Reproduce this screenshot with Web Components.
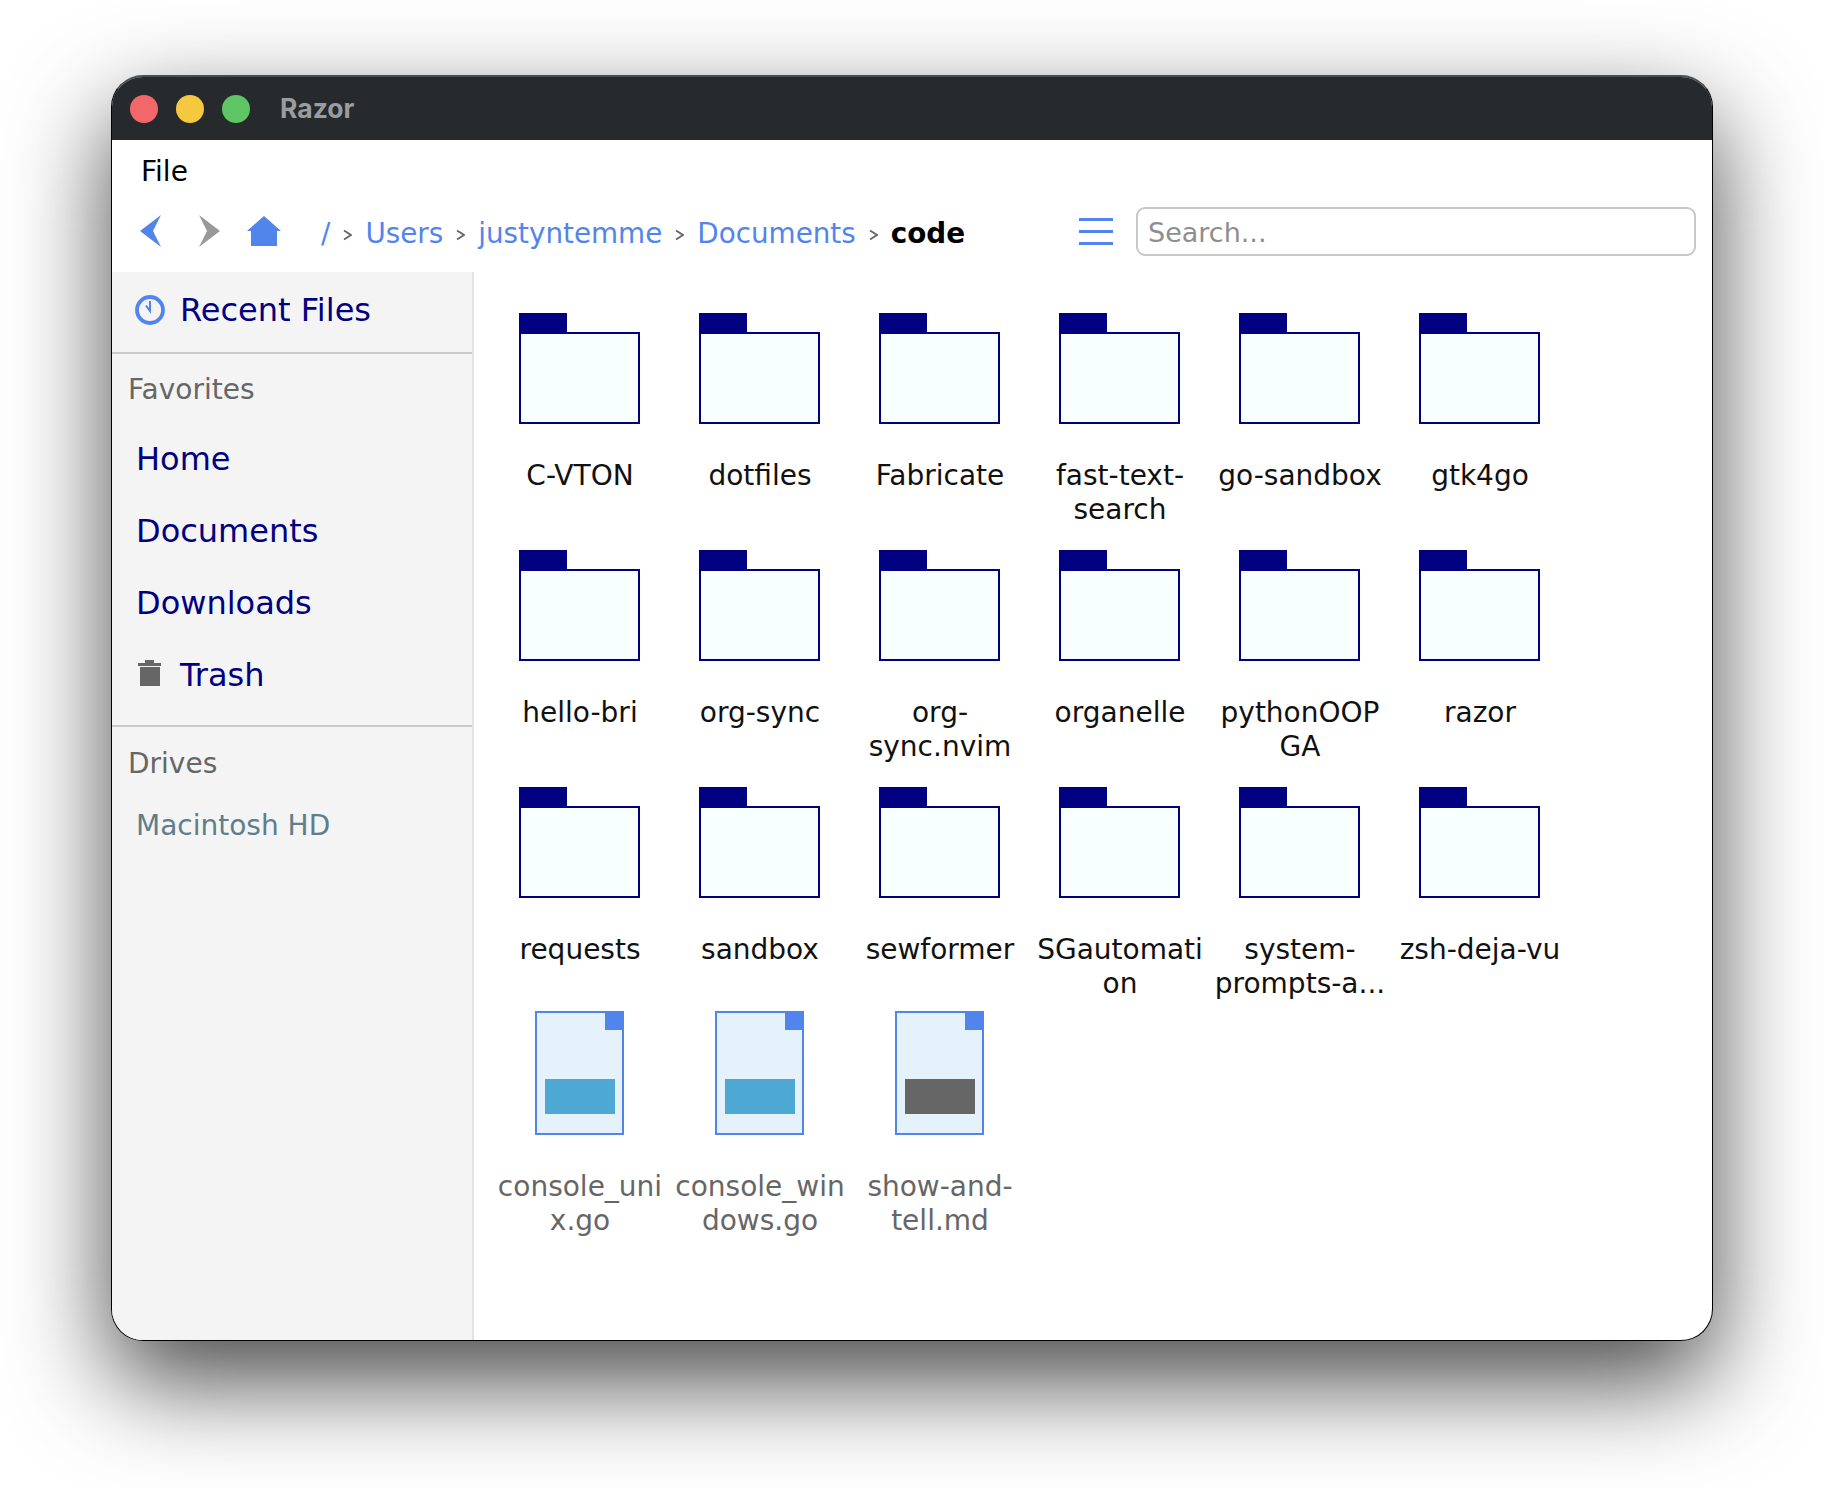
<!DOCTYPE html>
<html>
<head>
<meta charset="utf-8">
<title>Razor</title>
<style>
  html, body { margin: 0; background: #fff; }
  body { padding: 75px 111px 147px; font-family: "DejaVu Sans", sans-serif; }
</style>
</head>
<body>
<razor-window>
  <title-bar slot="title">Razor</title-bar>
  <menu-bar slot="menu">File</menu-bar>
  <tool-bar slot="tools">
    <path-crumb href>/</path-crumb>
    <path-crumb href sep>Users</path-crumb>
    <path-crumb href sep>justyntemme</path-crumb>
    <path-crumb href sep>Documents</path-crumb>
    <path-crumb sep>code</path-crumb>
  </tool-bar>
  <side-bar slot="side">
    <side-section>
      <side-item kind="recent">Recent Files</side-item>
    </side-section>
    <side-section title="Favorites" gap>
      <side-item>Home</side-item>
      <side-item>Documents</side-item>
      <side-item>Downloads</side-item>
      <side-item kind="trash">Trash</side-item>
    </side-section>
    <side-section title="Drives" last>
      <side-item kind="drive">Macintosh HD</side-item>
    </side-section>
  </side-bar>
  <file-grid slot="main">
    <file-tile>C-VTON</file-tile>
    <file-tile>dotfiles</file-tile>
    <file-tile>Fabricate</file-tile>
    <file-tile>fast-text-search</file-tile>
    <file-tile>go-sandbox</file-tile>
    <file-tile>gtk4go</file-tile>
    <file-tile>hello-bri</file-tile>
    <file-tile>org-sync</file-tile>
    <file-tile>org-sync.nvim</file-tile>
    <file-tile>organelle</file-tile>
    <file-tile>pythonOOPGA</file-tile>
    <file-tile>razor</file-tile>
    <file-tile>requests</file-tile>
    <file-tile>sandbox</file-tile>
    <file-tile>sewformer</file-tile>
    <file-tile>SGautomation</file-tile>
    <file-tile>system-prompts-a...</file-tile>
    <file-tile>zsh-deja-vu</file-tile>
    <file-tile doc="#4da9d4">console_unix.go</file-tile>
    <file-tile doc="#4da9d4">console_windows.go</file-tile>
    <file-tile doc="#666666">show-and-tell.md</file-tile>
  </file-grid>
</razor-window>

<script>
const define = (name, css, html) => {
  customElements.define(name, class extends HTMLElement {
    constructor() {
      super();
      this.attachShadow({ mode: "open" });
      this.shadowRoot.innerHTML = `<style>${css}</style>${typeof html === "function" ? html(this) : html}`;
    }
  });
};

const BLUE = "#5285ec";

define("razor-window", `
  :host {
    display: flex;
    flex-direction: column;
    height: 1266px;
    box-sizing: border-box;
    border: 1px solid #000;
    border-top: 2px solid #4a4d50;
    border-radius: 32px;
    overflow: hidden;
    background: #fff;
    box-shadow: 0 40px 100px rgba(0, 0, 0, .72);
  }
  .body { flex: 1; display: flex; min-height: 0; }
`, `
  <slot name="title"></slot>
  <slot name="menu"></slot>
  <slot name="tools"></slot>
  <div class="body"><slot name="side"></slot><slot name="main"></slot></div>
`);

define("title-bar", `
  :host {
    display: flex;
    align-items: center;
    height: 63px;
    flex: none;
    background: #262a2d;
    padding-left: 18px;
    gap: 18px;
  }
  i { width: 28px; height: 28px; border-radius: 50%; display: block; }
  span {
    margin: 0 0 2px 12px;
    font: 700 26.5px Inter, sans-serif;
    color: #9a9da0;
  }
`, `
  <i style="background:#f2686a"></i>
  <i style="background:#f5c83f"></i>
  <i style="background:#5fc463"></i>
  <span><slot></slot></span>
`);

define("menu-bar", `
  :host {
    display: block;
    flex: none;
    height: 53px;
    padding: 13px 0 0 29px;
    box-sizing: border-box;
    font-size: 28px;
    line-height: 38px;
    color: #000;
  }
`, `<slot></slot>`);

define("tool-bar", `
  :host {
    display: flex;
    align-items: center;
    flex: none;
    height: 79px;
    padding: 0 16px 3px 28px;
    box-sizing: border-box;
  }
  svg { display: block; flex: none; }
  .back { margin-right: 36px; }
  .fwd { margin-right: 27px; }
  nav { display: flex; align-items: center; margin: 5px 0 0 40px; flex: 1; }
  .menu { margin-right: 23px; }
  input {
    width: 560px;
    height: 49px;
    margin-top: 1px;
    box-sizing: border-box;
    border: 2px solid #c8c8c8;
    border-radius: 9px;
    padding: 2px 10px 0;
    font: 27px "DejaVu Sans", sans-serif;
    outline: none;
    background: #fff;
  }
  input::placeholder { color: #8e8e8e; opacity: 1; }
`, `
  <svg class="back" width="22" height="32" viewBox="0 0 22 32"><path d="M0 16 21 0 13 16 21 32Z" fill="${BLUE}"/></svg>
  <svg class="fwd" width="22" height="32" viewBox="0 0 22 32"><path d="M22 16 1 0 9 16 1 32Z" fill="#999"/></svg>
  <svg width="34" height="31" viewBox="0 0 34 31"><path d="M17 0 34 15H30V30H4V15H0Z" fill="${BLUE}"/></svg>
  <nav><slot></slot></nav>
  <svg class="menu" width="34" height="27" viewBox="0 0 34 27"><path d="M0 0H34V3H0ZM0 12H34V15H0ZM0 24H34V27H0Z" fill="${BLUE}"/></svg>
  <input placeholder="Search...">
`);

define("path-crumb", `
  :host {
    display: inline-flex;
    align-items: center;
    font-size: 27.8px;
    line-height: 40px;
    color: #000;
    font-weight: 700;
    white-space: nowrap;
  }
  :host([href]) { color: #5285ec; font-weight: 400; }
  svg { margin: 2px 13px 0; display: block; }
`, el => `${el.hasAttribute("sep") ? `<svg width="9" height="12" viewBox="0 0 9 12"><path d="M1 1.5 8 6 1 10.5" fill="none" stroke="#666" stroke-width="1.8"/></svg>` : ""}<slot></slot>`);

define("side-bar", `
  :host {
    display: block;
    flex: none;
    width: 360px;
    background: #f4f4f4;
    border-right: 2px solid #e2e2e2;
  }
`, `<slot></slot>`);

define("side-section", `
  :host {
    display: block;
    border-bottom: 2px solid #cacaca;
  }
  :host([gap]) { padding-bottom: 14px; }
  :host([last]) { border-bottom: 0; }
  h2 {
    margin: 0;
    padding: 17px 0 15px 16px;
    font-size: 28px;
    line-height: 40px;
    font-weight: 400;
    color: #666;
  }
  :host([gap]) h2 { padding: 16px 0 13px 16px; }
`, el => `${el.getAttribute("title") ? `<h2>${el.getAttribute("title")}</h2>` : ""}<slot></slot>`);

define("side-item", `
  :host {
    display: flex;
    align-items: center;
    height: 72px;
    padding-left: 24px;
    font-size: 32px;
    color: #000080;
    white-space: nowrap;
  }
  :host([kind="recent"]) { height: 80px; padding: 0 0 5px 23px; box-sizing: border-box; }
  :host([kind="trash"]) { padding-left: 26px; }
  :host([kind="drive"]) { height: 52px; font-size: 28px; color: #607d8b; }
  svg { display: block; margin-right: 15px; flex: none; }
  .bin { margin: -4px 18px 0 0; }
`, el => {
  const kind = el.getAttribute("kind");
  let icon = "";
  if (kind === "recent") icon = `<svg width="30" height="30" viewBox="0 0 30 30"><circle cx="15" cy="15" r="13" fill="none" stroke="${BLUE}" stroke-width="3.8"/><path d="M15 6V16L11 10.5" fill="none" stroke="${BLUE}" stroke-width="2"/></svg>`;
  if (kind === "trash") icon = `<svg class="bin" width="24" height="26" viewBox="0 0 24 26"><path d="M7 0H16V3H23V6H0V3H7ZM2 7H22V26H2Z" fill="#666"/></svg>`;
  return `${icon}<slot></slot>`;
});

define("file-grid", `
  :host {
    display: grid;
    flex: 1;
    grid-template-columns: repeat(6, 180px);
    grid-auto-rows: 237px;
    align-content: start;
    padding: 26px 0 0 15px;
  }
`, `<slot></slot>`);

define("file-tile", `
  :host { display: block; text-align: center; }
  .icon { height: 126px; display: flex; align-items: flex-end; justify-content: center; }
  svg { display: block; }
  .name {
    width: 176px;
    margin: 35px 0 0 3px;
    font-size: 28px;
    line-height: 34px;
    color: #111;
    overflow-wrap: anywhere;
  }
  :host([doc]) .name { color: #666; }
`, el => {
  const doc = el.getAttribute("doc");
  const icon = doc
    ? `<svg width="89" height="124" viewBox="0 0 89 124"><rect x="1" y="1" width="87" height="122" fill="#e5f2fb" stroke="${BLUE}" stroke-width="2"/><rect x="70" y="0" width="19" height="19" fill="${BLUE}"/><rect x="10" y="68" width="70" height="35" fill="${doc}"/></svg>`
    : `<svg width="121" height="111" viewBox="0 0 121 111"><rect x="0" y="0" width="48" height="21" fill="#000080"/><rect x="1" y="20" width="119" height="90" fill="#f8ffff" stroke="#000080" stroke-width="2"/></svg>`;
  return `<div class="icon">${icon}</div><div class="name"><slot></slot></div>`;
});
</script>
</body>
</html>
